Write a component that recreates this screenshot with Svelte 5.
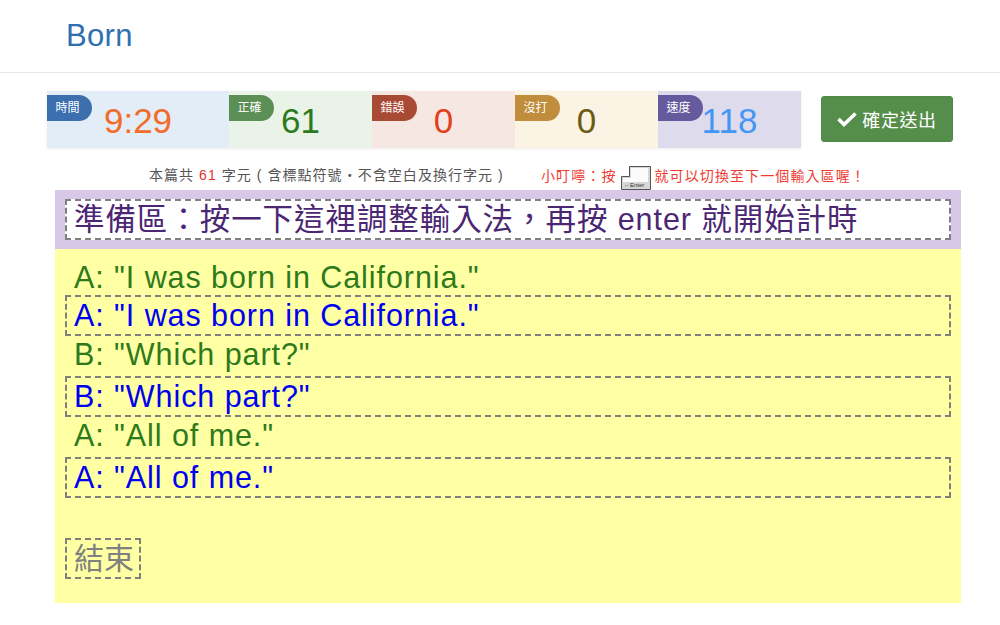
<script>
  const stats = [
    { label: '時間', value: '9:29', cls: 'time' },
    { label: '正確', value: '61', cls: 'right' },
    { label: '錯誤', value: '0', cls: 'wrong' },
    { label: '沒打', value: '0', cls: 'miss' },
    { label: '速度', value: '118', cls: 'speed' }
  ]

  const lines = ['A: "I was born in California."', 'B: "Which part?"', 'A: "All of me."']
</script>

<header>
  <h1>Born</h1>
</header>

<section class="top">
  <div class="stats">
    {#each stats as s}
      <div class="stat {s.cls}">
        <span class="tag">{s.label}</span>
        <span class="num">{s.value}</span>
      </div>
    {/each}
  </div>
  <button class="send">
    <svg width="20" height="16" viewBox="0 0 20 16"><path d="M1.500 8l5.500 5.500L18.500 2.500" fill="none" stroke="#fff" stroke-width="3.600"/></svg>
    確定送出
  </button>
</section>

<div class="info">
  <span class="count">本篇共 <em>61</em> 字元 ( 含標點符號‧不含空白及換行字元 )</span>
  <span class="tip">
    小叮嚀：按
    <svg class="key" width="30" height="24" viewBox="0 0 30 24">
      <path d="M8.500.5h21v23H.5V10.500h8z" fill="#d6d6d6" stroke="#555"/>
      <path d="M10 2h17v14H2v-4h8z" fill="#fbfbfb"/>
      <text x="3" y="21" font-size="6" fill="#333">←Enter</text>
    </svg>
    就可以切換至下一個輸入區喔！
  </span>
</div>

<main>
  <div class="ready">
    <div class="box">準備區：按一下這裡調整輸入法，再按 enter 就開始計時</div>
  </div>
  <div class="practice">
    {#each lines as line}
      <div class="source">{line}</div>
      <div class="input">{line}</div>
    {/each}
    <div class="end">結束</div>
  </div>
</main>

<style>
  :global(body) {
    background: #fff;
    font-family: "Liberation Sans", "Noto Sans CJK TC", sans-serif;
  }

  header {
    height: 73px;
    box-sizing: border-box;
    border-bottom: 1px solid #e7e7e7;
    padding-left: 66px;
  }

  h1 {
    margin: 0;
    font-size: 31px;
    font-weight: 400;
    line-height: 71px;
    letter-spacing: 0.3px;
    color: #2f6fb0;
  }

  .top {
    display: flex;
    align-items: flex-start;
    gap: 20px;
    padding: 18px 0 0 47px;
  }

  .stats {
    display: flex;
    height: 57px;
    box-shadow: 0 1px 3px rgba(0, 0, 0, 0.08);
  }

  .stat {
    position: relative;
    width: 143px;
    text-align: center;
  }

  .stat.time {
    width: 182px;
  }

  .tag {
    position: absolute;
    left: 0;
    top: 4px;
    box-sizing: border-box;
    width: 45px;
    height: 26px;
    padding-right: 4px;
    border-radius: 0 14px 14px 0;
    color: #fff;
    font-size: 12px;
    line-height: 26px;
    text-align: center;
  }

  .num {
    display: block;
    font-size: 35px;
    line-height: 59px;
  }

  .time { background: #e3edf7; }
  .time .tag { background: #3b6fae; }
  .time .num { color: #f26c2a; }
  .right { background: #e9f3e8; }
  .right .tag { background: #5b8f55; }
  .right .num { color: #2d7a1c; }
  .wrong { background: #f6e7e3; }
  .wrong .tag { background: #a94a34; }
  .wrong .num { color: #e2401c; }
  .miss { background: #fbf3e4; }
  .miss .tag { background: #c08d3c; }
  .miss .num { color: #6b5a14; }
  .speed { background: #dedcec; }
  .speed .tag { background: #665a9e; }
  .speed .num { color: #4496f5; }

  .send {
    display: flex;
    align-items: center;
    justify-content: center;
    gap: 5px;
    width: 132px;
    height: 46px;
    margin-top: 5px;
    padding: 0;
    border: 1px solid #4f8a46;
    border-radius: 3px;
    background: #558e4a;
    color: #fff;
    font-family: inherit;
    font-size: 18px;
    letter-spacing: 0.6px;
  }

  .info {
    display: flex;
    height: 42px;
    align-items: flex-start;
    padding: 12px 0 0 149px;
    box-sizing: border-box;
    font-size: 14px;
    letter-spacing: 1.05px;
    color: #555;
  }

  .count { width: 392px; line-height: 30px; white-space: nowrap; }
  .count em { color: #e5322d; font-style: normal; }
  .tip { color: #ee3b32; display: flex; align-items: center; gap: 4px; letter-spacing: 1.1px; white-space: nowrap; }
  .key { margin-top: 6px; letter-spacing: 0; }

  main {
    margin: 0 39px 0 55px;
    font-size: 30.500px;
    letter-spacing: 0.93px;
  }

  .ready {
    background: #d8c8e8;
    padding: 9px 10px;
    height: 59px;
    box-sizing: border-box;
  }

  .box {
    height: 41px;
    box-sizing: border-box;
    border: 2px dashed #808080;
    background: #fff;
    color: #4b2673;
    padding-left: 7px;
    line-height: 37px;
    white-space: nowrap;
  }

  .practice {
    background: #ffffa3;
    height: 354px;
    box-sizing: border-box;
    padding: 10px 10px 0;
  }

  .source {
    color: #2d7a1c;
    height: 40px;
    line-height: 36px;
    padding-left: 9px;
  }

  .source:first-child {
    height: 36px;
  }

  .input {
    height: 41px;
    box-sizing: border-box;
    border: 2px dashed #808080;
    color: #0000f0;
    padding-left: 7px;
    line-height: 36px;
  }

  .end {
    display: inline-block;
    margin-top: 40px;
    height: 41px;
    box-sizing: border-box;
    border: 2px dashed #808080;
    color: #808080;
    font-size: 30px;
    padding: 0 5px 0 7px;
    line-height: 37px;
    letter-spacing: 0;
  }
</style>
